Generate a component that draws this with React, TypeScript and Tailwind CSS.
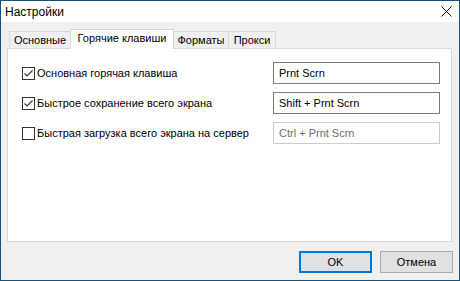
import React, { useState } from "react";

const font = { fontFamily: '"Liberation Sans", Arial, sans-serif' };

function CheckBox({ checked }: { checked: boolean }) {
  return (
    <span className="w-[13px] h-[13px] border border-[#333333] bg-white flex items-center justify-center shrink-0">
      {checked && (
        <svg width="11" height="11" viewBox="0 0 11 11">
          <path d="M1.5 5.5 L4 8 L9.5 2.5" fill="none" stroke="#333333" strokeWidth="1.1" />
        </svg>
      )}
    </span>
  );
}

interface HotkeyRow {
  label: string;
  value: string;
  enabled: boolean;
}

const rows: HotkeyRow[] = [
  { label: "Основная горячая клавиша", value: "Prnt Scrn", enabled: true },
  { label: "Быстрое сохранение всего экрана", value: "Shift + Prnt Scrn", enabled: true },
  { label: "Быстрая загрузка всего экрана на сервер", value: "Ctrl + Prnt Scrn", enabled: false },
];

export default function App() {
  const [tab] = useState(1);
  const tabs = ["Основные", "Горячие клавиши", "Форматы", "Прокси"];
  const widths = ["w-[62px]", "w-[104px]", "w-[56px]", "w-[48px]"];

  return (
    <div
      className="w-[460px] h-[281px] border border-[#185078] bg-[#f0f0f0] flex flex-col text-[11px] text-black whitespace-nowrap"
      style={font}
    >
      {/* title bar */}
      <div className="h-[21px] bg-white flex items-center justify-between pl-[4px] pr-[7px]">
        <span className="text-[12px] leading-none">Настройки</span>
        <svg width="11" height="11" viewBox="0 0 11 11">
          <path d="M0.5 0.5 L10.5 10.5 M10.5 0.5 L0.5 10.5" stroke="#111" strokeWidth="1" />
        </svg>
      </div>

      <div className="flex-1 flex flex-col pt-[7px] pl-[6px] pr-[7px]">
        {/* tabs */}
        <div className="h-[19px] flex items-end pl-[2px]">
          {tabs.map((t, i) =>
            i === tab ? (
              <div
                key={t}
                className={`${widths[i]} h-[20px] -mb-px -ml-px relative z-10 bg-white border border-b-0 border-[#d9d9d9] flex items-center justify-center pb-[2px]`}
              >
                {t}
              </div>
            ) : (
              <div
                key={t}
                className={`${widths[i]} h-[17px] ${i > 0 ? "-ml-px" : ""} bg-[#f0f0f0] border border-b-0 border-[#d9d9d9] flex items-center justify-center`}
              >
                {t}
              </div>
            )
          )}
        </div>

        {/* panel */}
        <div className="h-[194px] bg-white border border-[#d9d9d9] pt-[13px] pl-[14px] pr-[11px] flex flex-col gap-[8px]">
          {rows.map((r) => (
            <div key={r.label} className="h-[22px] flex items-center justify-between">
              <div className="flex items-center gap-[2px]">
                <CheckBox checked={r.enabled} />
                <span>{r.label}</span>
              </div>
              <div
                className={`w-[167px] h-[22px] border flex items-center pl-[5px] bg-white ${
                  r.enabled ? "border-[#7a7a7a] text-black" : "border-[#cccccc] text-[#6d6d6d]"
                }`}
              >
                {r.value}
              </div>
            </div>
          ))}
        </div>

        {/* buttons */}
        <div className="mt-[9px] flex justify-end gap-[8px] -mr-[1px]">
          <button className="w-[73px] h-[22px] border-2 border-[#0078d7] bg-[#e1e1e1] flex items-center justify-center font-normal">
            OK
          </button>
          <button className="w-[73px] h-[22px] border border-[#adadad] bg-[#e1e1e1] flex items-center justify-center font-normal">
            Отмена
          </button>
        </div>
      </div>
    </div>
  );
}
